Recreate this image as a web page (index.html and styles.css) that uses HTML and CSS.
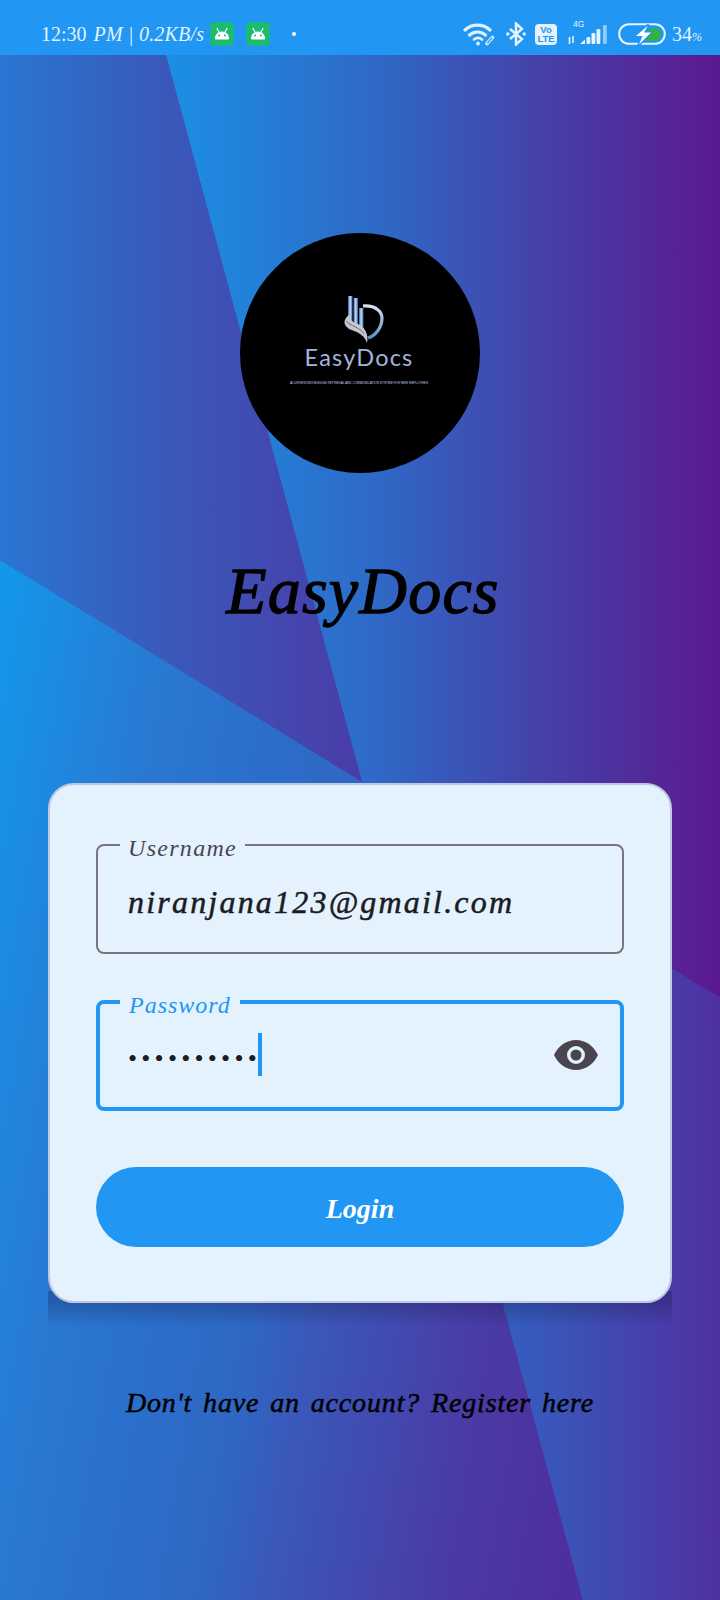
FILE: index.html
```html
<!DOCTYPE html>
<html lang="en">
<head>
<meta charset="utf-8">
<title>EasyDocs</title>
<link rel="stylesheet" href="styles.css">
</head>
<body>
<div class="screen">
  <div class="bg bg-ne"></div>
  <div class="bg bg-nw"></div>
  <div class="bg bg-sw"></div>
  <div class="bg bg-se"></div>

  <header class="status">
    <div class="status-left">
      <span class="clock">12:30</span>
      <span class="net">PM | 0.2KB/s</span>
      <svg class="app" viewBox="0 0 24 24"><rect width="24" height="24" rx="5" fill="#1dbb71"/><path d="M5 16.500c0-4.200 3-7 7-7s7 2.800 7 7c0 .6-.4 1-1 1H6c-.6 0-1-.4-1-1z" fill="#fff"/><path d="M7 6.500l2 3.500M17 6.500l-2 3.500" stroke="#fff" stroke-width="1.200" stroke-linecap="round"/><circle cx="9" cy="13.500" r="1" fill="#1dbb71"/><circle cx="15" cy="13.500" r="1" fill="#1dbb71"/></svg>
      <svg class="app app-2" viewBox="0 0 24 24"><rect width="24" height="24" rx="5" fill="#1dbb71"/><path d="M5 16.500c0-4.200 3-7 7-7s7 2.800 7 7c0 .6-.4 1-1 1H6c-.6 0-1-.4-1-1z" fill="#fff"/><path d="M7 6.500l2 3.500M17 6.500l-2 3.500" stroke="#fff" stroke-width="1.200" stroke-linecap="round"/><circle cx="9" cy="13.500" r="1" fill="#1dbb71"/><circle cx="15" cy="13.500" r="1" fill="#1dbb71"/></svg>
      <span class="dot"></span>
    </div>
    <div class="status-right">
      <svg class="wifi" viewBox="0 0 32 24" fill="none" stroke="#dff1ff" stroke-linecap="round"><path d="M2 8C9 1.500 20 1.500 27 8" stroke-width="3.200"/><path d="M6.500 13c4.500-4 11.500-4 16 0" stroke-width="3.200"/><path d="M11 17.500c2.500-2 5.500-2 8 0" stroke-width="2.800"/><circle cx="15" cy="21.500" r="1.900" fill="#dff1ff" stroke="none"/><path d="M24 21.500l5.500-6" stroke-width="3.600" stroke="#cfe8fb"/><path d="M24.800 20.700l3.900-4.300" stroke-width="1.200" stroke="#2196f3"/></svg>
      <svg class="bt" viewBox="0 0 20 24" fill="none" stroke="#e6f4ff" stroke-width="2.400"><path d="M4 7l12 10-6 5.500V1.500l6 5.500L4 17"/><circle cx="1.800" cy="12" r="1.700" fill="#e6f4ff" stroke="none"/><circle cx="18.200" cy="12" r="1.700" fill="#e6f4ff" stroke="none"/></svg>
      <div class="volte"><span>Vo</span><span>LTE</span></div>
      <div class="signal">
        <span class="four-g">4G</span>
        <svg class="bars" viewBox="0 0 39 20"><path d="M1.500 12v7M5 11v7" stroke="#dff1ff" stroke-width="1.600"/><path d="M12 19h5v-4.500z" fill="#e6f4ff"/><rect x="18.500" y="12" width="3.800" height="7" rx="1.200" fill="#e6f4ff"/><rect x="23.500" y="8" width="3.800" height="11" rx="1.200" fill="#e6f4ff"/><rect x="28.500" y="4" width="3.800" height="15" rx="1.200" fill="#e6f4ff"/><rect x="35" y="0" width="3.800" height="19" rx="1.200" fill="#8fcdf8"/></svg>
      </div>
      <svg class="battery" viewBox="0 0 48 22"><rect x="1.200" y="1.200" width="45.600" height="19.600" rx="9.800" fill="none" stroke="#e6f4ff" stroke-width="2"/><path d="M30 5.500h7a6 6 0 0 1 0 12h-9z" fill="#34b53a"/><path d="M30 2.500L18 13h6.500L21 21.500 33 9.500h-7z" fill="#fff" stroke="#2196f3" stroke-width="3" stroke-linejoin="round" paint-order="stroke"/></svg>
      <span class="pct">34<small>%</small></span>
    </div>
  </header>

  <main class="main">
    <div class="logo">
      <svg viewBox="0 0 240 240">
        <defs>
          <linearGradient id="barfill" x1="0" y1="0" x2="1" y2="0"><stop offset="0" stop-color="#2f62a8"/><stop offset=".5" stop-color="#cfe0f5"/><stop offset="1" stop-color="#2c5a9e"/></linearGradient>
          <linearGradient id="arcfill" x1="0" y1="0" x2="0" y2="1"><stop offset="0" stop-color="#d5e3f2"/><stop offset="1" stop-color="#5f8cc4"/></linearGradient>
        </defs>
        <path d="M123 73C137 72 142 80 142 85 142 95 135 103 128 105" fill="none" stroke="url(#arcfill)" stroke-width="3.200"/>
        <rect x="108" y="63" width="4.500" height="28" fill="url(#barfill)"/>
        <rect x="113.500" y="65" width="4.500" height="30" fill="url(#barfill)"/>
        <rect x="119" y="75" width="4.500" height="24" fill="url(#barfill)"/>
        <path d="M108 93H118V97H110L108 96z" fill="#1d4e9a"/>
        <path d="M112 80C104 84 102 91 108 95 115 99 124 100 127 110 129 102 125 94 118 91 112 89 108 86 112 80z" fill="#c4c8cc"/>
        <path d="M106 88C110 93 120 94 124 101" fill="none" stroke="#6d7278" stroke-width="1"/>
        <text class="logo-name" x="119" y="133" text-anchor="middle">EasyDocs</text>
        <text class="logo-tag" x="119" y="151" text-anchor="middle" textLength="138" lengthAdjust="spacingAndGlyphs">AI-DRIVEN KNOWLEDGE RETRIEVAL AND COMMUNICATION SYSTEM FOR NEW EMPLOYEES</text>
      </svg>
    </div>

    <h1 class="title">EasyDocs</h1>

    <section class="card">
      <div class="field">
        <span class="label">Username</span>
        <span class="value">niranjana123@gmail.com</span>
      </div>
      <div class="field field-focus">
        <span class="label label-focus">Password</span>
        <span class="dots">••••••••••</span><span class="caret"></span>
        <svg class="eye" viewBox="0 0 44 30"><path fill-rule="evenodd" d="M22 0C32 0 40 6.500 44 15 40 23.500 32 30 22 30S4 23.500 0 15C4 6.500 12 0 22 0zM22 6a9 9 0 1 0 0 18 9 9 0 0 0 0-18zM22 9.500a5.500 5.500 0 1 1 0 11 5.500 5.500 0 0 1 0-11z" fill="#49454f"/></svg>
      </div>
      <button class="login" type="button">Login</button>
    </section>

    <p class="register">Don't have an account? Register here</p>
  </main>
</div>
</body>
</html>
```

FILE: styles.css
```css
* { box-sizing: border-box; }
html, body { margin: 0; padding: 0; }
body { width: 720px; height: 1600px; overflow: hidden; font-family: "Liberation Serif", "DejaVu Serif", serif; }

.screen { position: relative; width: 720px; height: 1600px; overflow: hidden; display: flex; flex-direction: column; background: #3c52b6; }

.bg { position: absolute; inset: 0; }
.bg-ne { background: linear-gradient(90deg, #1398ea 120px, #1b8fe3 170px, #2f68c6 380px, #4541a9 540px, #5a1b90 710px); clip-path: polygon(166px 55px, 720px 55px, 720px 998px, 362px 782px); }
.bg-nw { background: linear-gradient(90deg, #2a76d2 0, #3a58ba 170px, #4a3ca8 360px); clip-path: polygon(0 55px, 166px 55px, 362px 782px, 0 560px); }
.bg-sw { background: linear-gradient(100deg, #1298ea 97px, #2a78d2 278px, #2a70cc 366px, #2e68c4 470px, #3a58ba 538px, #4a3aa5 715px, #4e2fa0 822px); clip-path: polygon(0 560px, 362px 782px, 583px 1600px, 0 1600px); }
.bg-se { background: linear-gradient(90deg, #2a6cca 420px, #3a54b8 560px, #5030a2 720px); clip-path: polygon(362px 782px, 720px 998px, 720px 1600px, 583px 1600px); }

.status { position: relative; flex: none; height: 55px; background: #2196f3; display: flex; justify-content: space-between; align-items: center; padding: 13px 20px 0 41px; color: #e3f4ff; }
.status-left { display: flex; align-items: center; font-size: 20px; }
.clock { margin-right: 7px; }
.net { font-style: italic; letter-spacing: .2px; }
.app { width: 24px; height: 24px; margin-left: 6px; }
.app-2 { margin-left: 12px; }
.dot { width: 4px; height: 4px; border-radius: 50%; background: #fff; margin-left: 22px; }
.status-right { display: flex; align-items: center; }
.wifi { width: 32px; height: 24px; }
.bt { width: 20px; height: 24px; margin-left: 11px; }
.volte { width: 22px; height: 21px; margin-left: 9px; background: #e3f2fd; border-radius: 4px; display: flex; flex-direction: column; align-items: center; justify-content: center; color: #2196f3; font: 700 9.500px/9.500px "Liberation Sans", sans-serif; }
.signal { position: relative; width: 39px; height: 20px; margin-left: 11px; margin-top: 2px; }
.four-g { position: absolute; left: 5px; top: -6px; font: 8.500px/10px "Liberation Sans", sans-serif; color: #e6f4ff; }
.bars { width: 39px; height: 20px; display: block; }
.battery { width: 48px; height: 22px; margin-left: 11px; }
.pct { width: 28px; font-size: 20px; margin-left: 6px; white-space: nowrap; }
.pct small { font-size: 12px; font-style: italic; }

.main { position: relative; z-index: 0; flex: 1; display: flex; flex-direction: column; align-items: center; }
.logo { width: 240px; height: 240px; margin-top: 178px; border-radius: 50%; background: #000; overflow: hidden; }
.logo svg { display: block; width: 240px; height: 240px; }
.logo-name { font: 400 23.500px "Lato", sans-serif; letter-spacing: 1.200px; fill: #a3b3dd; }
.logo-tag { font: 4px "Liberation Sans", sans-serif; fill: #c5d0ea; }

.title { margin: 68px 0 0 6px; height: 100px; font-size: 66px; line-height: 100px; font-style: italic; font-weight: 400; color: #000; letter-spacing: 1.200px; -webkit-text-stroke: 1.300px #000; }

.card { position: relative; width: 624px; height: 520px; margin-top: 142px; padding: 59px 46px 0; background: #e3f2fd; border: 2px solid #c3c6e2; border-radius: 26px; }
.card::after { content: ""; position: absolute; z-index: -1; left: -2px; right: -2px; top: calc(100% - 10px); height: 36px; background: linear-gradient(180deg, rgba(20,20,60,.28) 30%, rgba(20,20,60,0) 100%); }

.field { position: relative; height: 110px; display: flex; align-items: center; padding-left: 30px; border: 2px solid #79757f; border-radius: 8px; }
.field-focus { height: 111px; margin-top: 46px; padding-left: 28px; border: 4px solid #2196f3; }
.label { position: absolute; left: 22px; top: -13px; padding: 0 8px; background: #e3f2fd; font-size: 24px; line-height: 30px; font-style: italic; color: #49454f; letter-spacing: 1.300px; }
.label-focus { left: 20px; top: -14px; padding: 0 9px; color: #2196f3; letter-spacing: 1px; }
.value { margin-top: 6px; font-size: 32px; font-style: italic; color: #1c1b1f; letter-spacing: 2.200px; -webkit-text-stroke: .5px #1c1b1f; }
.dots { font-size: 26px; color: #1c1b1f; letter-spacing: 4.200px; margin-top: 6px; }
.caret { width: 4px; height: 43px; margin-left: -3px; background: #2196f3; margin-bottom: 2px; }
.eye { position: absolute; right: 22px; top: 36px; width: 44px; height: 30px; }

.login { display: block; width: 528px; height: 80px; margin-top: 56px; padding: 4px 0 0; border: 0; border-radius: 40px; background: #2196f3; color: #fff; font-family: inherit; font-size: 28px; font-style: italic; font-weight: 700; }

.register { margin: 80px 0 0; font-size: 28px; line-height: 40px; font-style: italic; color: #000; letter-spacing: .85px; word-spacing: 3px; -webkit-text-stroke: .5px #000; }
```
